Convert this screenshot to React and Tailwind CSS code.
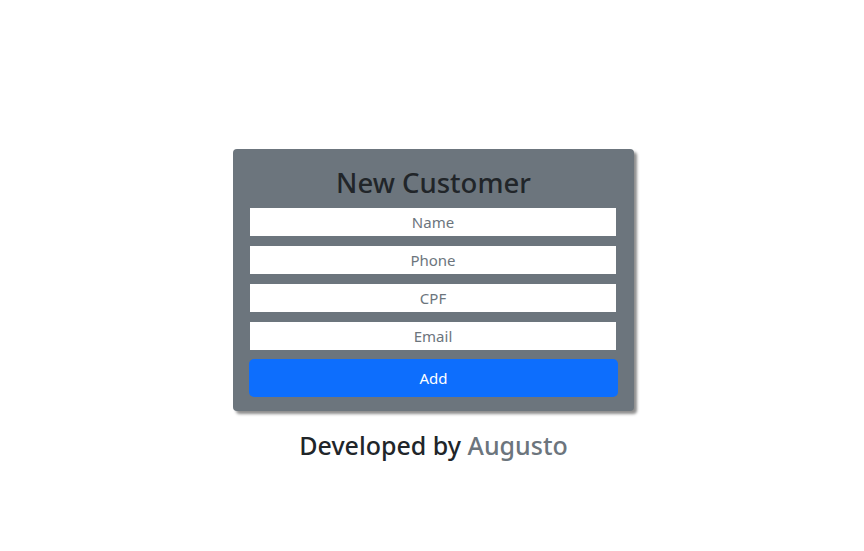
export default function App() {
  const font = { fontFamily: '"Noto Sans", "Open Sans", sans-serif' };
  return (
    <div className="w-[864px] h-[551px] bg-white flex flex-col items-center pt-[149px] pl-[3px]" style={font}>
      <div className="w-[401px] bg-[#6c757d] rounded-[4px] shadow-[3px_3px_3px_rgba(0,0,0,0.45)] px-[17px] pt-[16px] pb-[14px] flex flex-col">
        <h2 className="text-[27.5px] leading-[36px] font-medium text-[#212529] text-center mb-[7px]">New Customer</h2>
        <div className="flex flex-col gap-[10px]">
          {["Name", "Phone", "CPF", "Email"].map((p) => (
            <input
              key={p}
              placeholder={p}
              className="w-[366px] h-[28px] bg-white text-center text-[15px] placeholder:text-[#6c757d] outline-none"
            />
          ))}
        </div>
        <button className="mt-[9px] -mx-[1px] h-[38px] rounded-[5px] bg-[#0d6efd] text-white text-[15px]">Add</button>
      </div>
      <div className="mt-[20px] text-[25px] leading-[28px] font-medium text-[#212529]">
        Developed by <span className="text-[#6c757d]">Augusto</span>
      </div>
    </div>
  );
}
